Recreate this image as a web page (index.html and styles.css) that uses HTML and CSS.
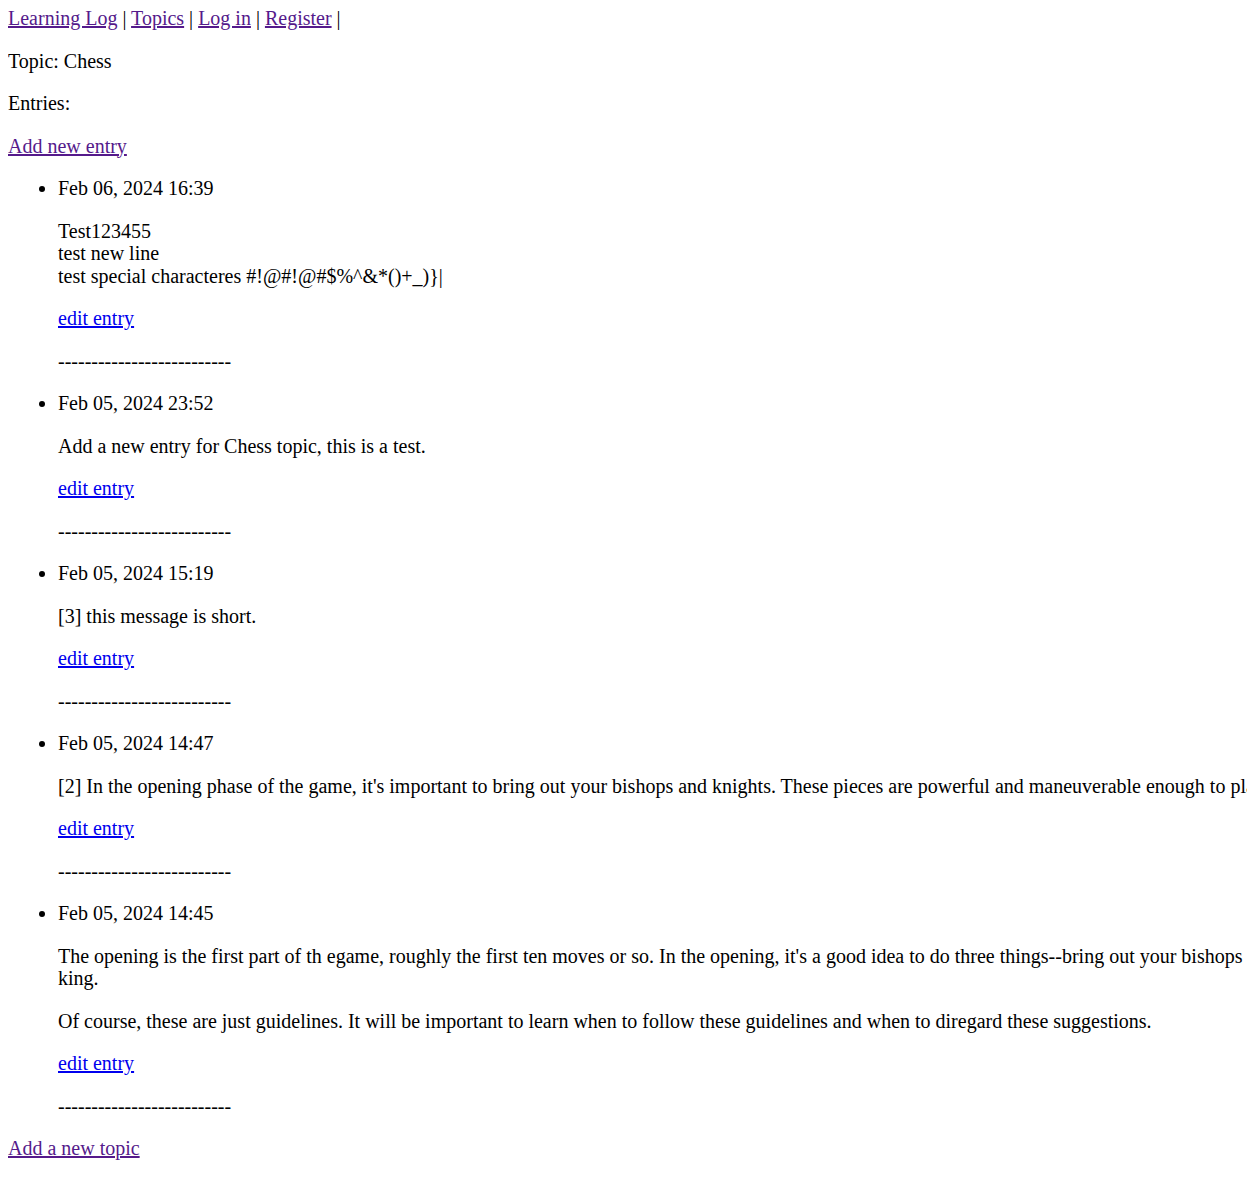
FILE: index.html
```html
<!DOCTYPE html>
<html lang="en">
<head>
<meta charset="utf-8">
<title>Learning Log</title>
<link rel="stylesheet" href="styles.css">
</head>
<body>
<div class="nav"><a href="#" class="visited">Learning Log</a> | <a href="#" class="visited">Topics</a> | <a href="#" class="visited">Log in</a> | <a href="#" class="visited">Register</a> |</div>
<p>Topic: Chess</p>
<p>Entries:</p>
<p><a href="#" class="visited">Add new entry</a></p>
<ul class="entries">
<li>
<p>Feb 06, 2024 16:39</p>
<p>Test123455<br>test new line<br>test special characteres #!@#!@#$%^&amp;*()+_)}|</p>
<p><a href="#" class="link">edit entry</a></p>
<p>--------------------------</p>
</li>
<li>
<p>Feb 05, 2024 23:52</p>
<p>Add a new entry for Chess topic, this is a test.</p>
<p><a href="#" class="link">edit entry</a></p>
<p>--------------------------</p>
</li>
<li>
<p>Feb 05, 2024 15:19</p>
<p>[3] this message is short.</p>
<p><a href="#" class="link">edit entry</a></p>
<p>--------------------------</p>
</li>
<li>
<p>Feb 05, 2024 14:47</p>
<p>[2] In the opening phase of the game, it's important to bring out your bishops and knights. These pieces are powerful and maneuverable enough to play a significant role in the beginning moves of a game.</p>
<p><a href="#" class="link">edit entry</a></p>
<p>--------------------------</p>
</li>
<li>
<p>Feb 05, 2024 14:45</p>
<p>The opening is the first part of th egame, roughly the first ten moves or so. In the opening, it's a good idea to do three things--bring out your bishops and knights, try to control the center of the board, and castle your king.</p>
<p>Of course, these are just guidelines. It will be important to learn when to follow these guidelines and when to diregard these suggestions.</p>
<p><a href="#" class="link">edit entry</a></p>
<p>--------------------------</p>
</li>
</ul>
<p><a href="#" class="visited">Add a new topic</a></p>
</body>
</html>
```
FILE: styles.css
```css
html {
  overflow: hidden;
}
body {
  margin: 7px 8px 8px;
  width: 1795px;
  font-family: "Liberation Serif", "Times New Roman", serif;
  font-size: 20px;
  line-height: 22.5px;
  color: #000;
  background: #fff;
}
p {
  margin: 20px 0;
}
.entries {
  margin: 20px 0;
  padding-left: 50px;
}
a.visited {
  color: #551a8b;
}
a.link {
  color: #0000ee;
}
```
